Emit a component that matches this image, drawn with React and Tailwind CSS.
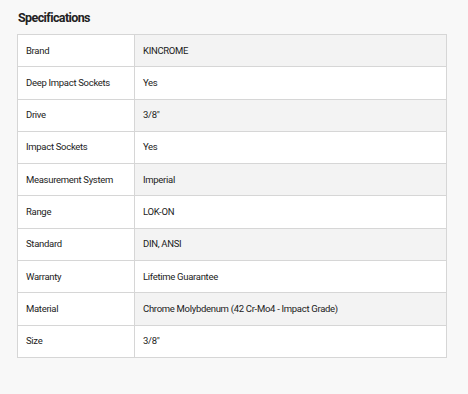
const specs = [
  ["Brand", "KINCROME"],
  ["Deep Impact Sockets", "Yes"],
  ["Drive", "3/8\""],
  ["Impact Sockets", "Yes"],
  ["Measurement System", "Imperial"],
  ["Range", "LOK-ON"],
  ["Standard", "DIN, ANSI"],
  ["Warranty", "Lifetime Guarantee"],
  ["Material", "Chrome Molybdenum (42 Cr-Mo4 - Impact Grade)"],
  ["Size", "3/8\""],
];

export default function App() {
  return (
    <div className="w-[468px] h-[394px] bg-[#f8f8f8] font-['Roboto',sans-serif] text-[#222] pt-[9px] px-[17px]">
      <h2 className="text-[12.5px] font-bold leading-[18px] tracking-[-0.6px] pl-px mb-[7px]">
        Specifications
      </h2>

      <table className="w-[430px] border-collapse text-[9.5px] tracking-[-0.3px]">
        <tbody>
          {specs.map(([label, value], i) => (
            <tr key={label} className="h-[32.3px]">
              <td className="w-[117px] border border-[#d6d6d6] bg-white px-2">
                {label}
              </td>
              <td
                className={
                  "border border-[#d6d6d6] px-2 " +
                  (i % 2 === 0 ? "bg-[#f3f3f3]" : "bg-white")
                }
              >
                {value}
              </td>
            </tr>
          ))}
        </tbody>
      </table>
    </div>
  );
}
